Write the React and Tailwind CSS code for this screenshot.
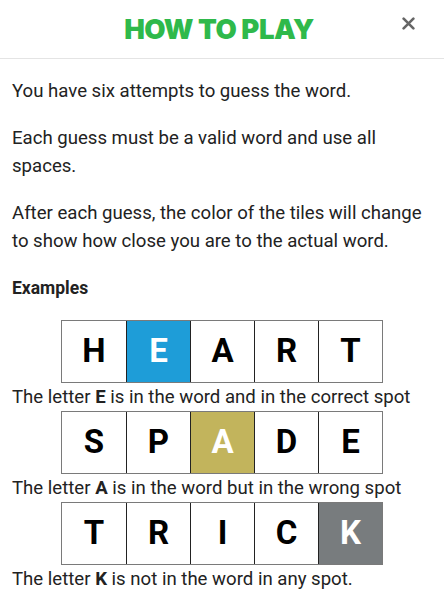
import React from "react";

const rows = [
  { word: "HEART", idx: 1, color: "bg-[#1e9dd8]", letter: "E", text: "is in the word and in the correct spot" },
  { word: "SPADE", idx: 2, color: "bg-[#c2b45c]", letter: "A", text: "is in the word but in the wrong spot" },
  { word: "TRICK", idx: 4, color: "bg-[#787c7e]", letter: "K", text: "is not in the word in any spot." },
];

function Tiles({ word, idx, color }) {
  return (
    <div className="flex justify-center">
      <div className="flex border border-[#7a7a7a]">
        {word.split("").map((ch, i) => (
          <div
            key={i}
            className={
              "w-[64px] h-[61px] flex items-center justify-center text-[33px] font-bold " +
              (i > 0 ? "border-l-[1.5px] border-[#222] " : "") +
              (i === idx ? color + " text-white" : "bg-white text-black")
            }
          >
            {ch}
          </div>
        ))}
      </div>
    </div>
  );
}

export default function App() {
  return (
    <div className="w-[444px] h-[600px] bg-white overflow-hidden text-[#222]" style={{ fontFamily: "Roboto, 'Liberation Sans', sans-serif" }}>
      <header className="relative h-[59px] border-b border-[#e4e4e4] flex items-center justify-center">
        <h1 className="text-[27.5px] font-black tracking-[-0.5px] text-[#2fb94b] pt-[1px] pr-[6px]" style={{ fontFamily: "Inter, sans-serif" }}>
          HOW TO PLAY
        </h1>
        <button className="absolute right-[29px] top-[17px] text-[#666]">
          <svg width="13" height="13" viewBox="0 0 12 12">
            <path d="M1.5 1.5 L10.5 10.5 M10.5 1.5 L1.5 10.5" stroke="currentColor" strokeWidth="2.4" strokeLinecap="round" />
          </svg>
        </button>
      </header>
      <main className="px-[12px] pt-[18px] text-[18.6px] leading-[28.5px]">
        <p>You have six attempts to guess the word.</p>
        <p className="mt-[18px]">Each guess must be a valid word and use all spaces.</p>
        <p className="mt-[18px]">After each guess, the color of the tiles will change to show how close you are to the actual word.</p>
        <p className="mt-[18px] font-bold text-[17.5px]">Examples</p>
        <div className="mt-[18px]">
          {rows.map((r) => (
            <div key={r.word}>
              <Tiles word={r.word} idx={r.idx} color={r.color} />
              <p className="leading-[28px]">
                The letter <b>{r.letter}</b> {r.text}
              </p>
            </div>
          ))}
        </div>
      </main>
    </div>
  );
}
